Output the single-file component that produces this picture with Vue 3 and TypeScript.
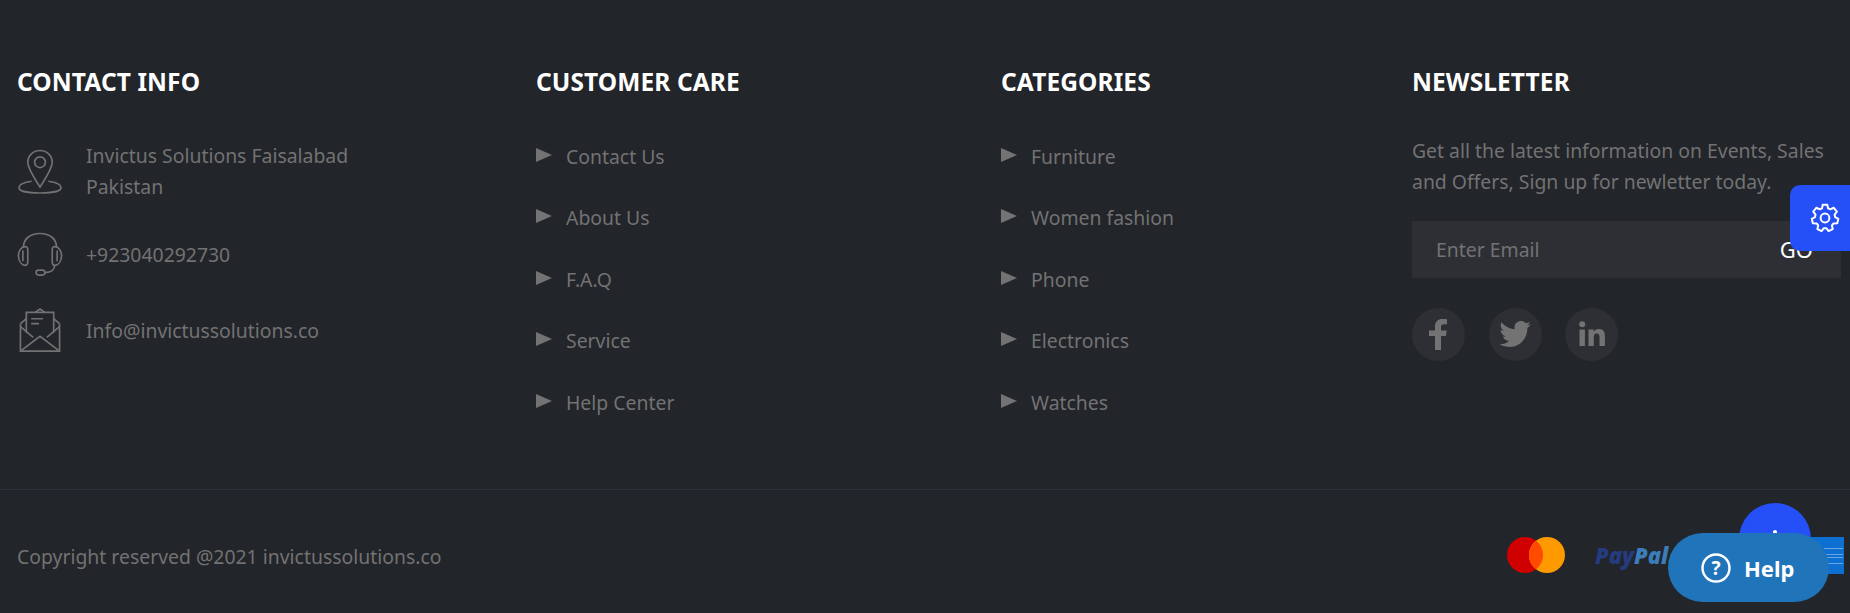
<script setup lang="ts">
const care: string[] = ['Contact Us', 'About Us', 'F.A.Q', 'Service', 'Help Center']
const categories: string[] = ['Furniture', 'Women fashion', 'Phone', 'Electronics', 'Watches']
</script>

<template>
  <footer class="footer">
    <div class="columns">
      <section>
        <h4>CONTACT INFO</h4>
        <div class="contact first">
          <svg class="ci" viewBox="0 0 46 46" fill="none" stroke="#727272" stroke-width="1.700">
            <path d="M23 1.500c-7 0-12.500 5.500-12.500 12 0 6.500 6 15 12.500 25.500 6.500-10.500 12.500-19 12.500-25.500 0-6.500-5.500-12-12.500-12z" />
            <circle cx="23" cy="13.500" r="5.500" />
            <path d="M14.500 33C6.500 34 1.500 36.500 1.500 39.500 1.500 43 11 45 23 45s21.500-2 21.500-5.500c0-3-5-5.500-13-6.500" />
          </svg>
          <p>Invictus Solutions Faisalabad<br />Pakistan</p>
        </div>
        <div class="contact second">
          <svg class="ci" viewBox="0 0 46 46" fill="none" stroke="#727272" stroke-width="1.700">
            <path d="M6 16C6 7 13 1.500 23 1.500S40 7 40 16" />
            <path d="M7 15C3.500 16 1 20 1 24.500S3.500 33 7 34c2 .3 3.500-.7 3.500-3V18c0-2.300-1.500-3.300-3.500-3z" />
            <path d="M39 15c3.500 1 6 5 6 9.500S42.500 33 39 34c-2 .3-3.500-.7-3.500-3V18c0-2.300 1.500-3.300 3.500-3z" />
            <path d="M5.500 19v11M40.500 19v11" />
            <path d="M38 34c0 4-3 7.500-10 7.500" />
            <rect x="19" y="39" width="9" height="5" rx="2.500" />
          </svg>
          <p>+923040292730</p>
        </div>
        <div class="contact third">
          <svg class="ci" viewBox="0 0 46 46" fill="none" stroke="#727272" stroke-width="1.700">
            <path d="M3 16v28h40V16" />
            <path d="M3 16l6-5M43 16l-6-5M3 44l20-15 20 15" />
            <path d="M3 19l13 11M43 19L30 30" />
            <path d="M9 25V4.500h28V25" />
            <path d="M18 4.500L23 1l5 3.500M14 11h12M14 16h8" />
          </svg>
          <p>Info@invictussolutions.co</p>
        </div>
      </section>

      <section>
        <h4>CUSTOMER CARE</h4>
        <ul>
          <li v-for="item in care" :key="item"><i class="arrow"></i><span>{{ item }}</span></li>
        </ul>
      </section>

      <section>
        <h4>CATEGORIES</h4>
        <ul>
          <li v-for="item in categories" :key="item"><i class="arrow"></i><span>{{ item }}</span></li>
        </ul>
      </section>

      <section class="news">
        <h4>NEWSLETTER</h4>
        <p class="blurb">Get all the latest information on Events, Sales and Offers, Sign up for newletter today.</p>
        <div class="subscribe">
          <span class="placeholder">Enter Email</span>
          <span class="go">GO</span>
        </div>
        <div class="social">
          <span class="round">
            <svg width="20" height="31" viewBox="0 0 20 31" fill="#737373"><path d="M6 31V17H0v-5.500h6V7.500C6 2.500 9 0 13.500 0c2 0 3.800.2 4.500.3v5h-3c-2.300 0-3 1.100-3 2.800v3.400h5.700l-.8 5.500H12v14z" /></svg>
          </span>
          <span class="round">
            <svg width="32" height="26" viewBox="0 0 24 20" fill="#737373"><path d="M24 2.400c-.9.400-1.800.7-2.800.8 1-.6 1.800-1.600 2.200-2.700-1 .6-2 1-3.100 1.200A4.900 4.900 0 0 0 11.900 6.200C7.800 6 4.200 4 1.700.9A4.900 4.900 0 0 0 3.200 7.500c-.8 0-1.600-.2-2.200-.6v.1c0 2.400 1.700 4.400 3.900 4.800-.7.200-1.500.2-2.200.1.600 2 2.400 3.400 4.600 3.400A9.900 9.900 0 0 1 0 17.800 14 14 0 0 0 7.500 20c9.100 0 14-7.500 14-14v-.6c1-.7 1.800-1.600 2.500-3z" /></svg>
          </span>
          <span class="round">
            <svg width="26" height="26" viewBox="0 0 26 26" fill="#737373"><circle cx="3.200" cy="3.200" r="3" /><rect x=".5" y="8.500" width="5.400" height="16.500" /><path d="M9.500 8.500h5.200v2.300c.8-1.400 2.600-2.700 5.200-2.700 5 0 6 3.300 6 7.600V25h-5.400v-8.300c0-2-.1-4.300-2.700-4.300s-3 2-3 4.200V25H9.500z" /></svg>
          </span>
        </div>
      </section>
    </div>

    <div class="bottom">
      <p class="copy">Copyright reserved @2021 invictussolutions.co</p>
      <div class="pay">
        <svg class="mc" width="58" height="36" viewBox="0 0 58 36">
          <circle cx="18" cy="18" r="18" fill="#d00000" />
          <circle cx="40" cy="18" r="18" fill="#ff9900" />
          <path d="M29 3.700a18 18 0 0 1 0 28.600 18 18 0 0 1 0-28.600z" fill="#ff4b00" />
        </svg>
        <span class="paypal"><b>Pay</b><b class="pal">Pal</b></span>
        <span class="amex">
          <i></i><i></i>
        </span>
      </div>
    </div>

    <button class="gear" type="button" aria-label="Settings">
      <svg width="32" height="32" viewBox="0 0 24 24" fill="none" stroke="#fff" stroke-width="1.500" stroke-linejoin="round">
        <path d="M10.300 2.600h3.400l.6 2.700 1.700.8 2.500-1.200 2.400 2.900-1.700 2.200.4 1.900 2.400 1.300-.8 3.400-2.800.1-1.200 1.500.6 2.700-3.100 1.500-1.700-2.200h-1.900l-1.700 2.200-3.100-1.500.6-2.700-1.200-1.500-2.800-.1-.8-3.400 2.400-1.300.4-1.900-1.700-2.200 2.400-2.900 2.500 1.200 1.700-.8z" transform="translate(0 -.6)" />
        <circle cx="12" cy="12" r="3.300" />
      </svg>
    </button>
    <div class="top-btn"><i></i></div>
    <button class="help" type="button">
      <svg width="30" height="30" viewBox="0 0 30 30" fill="none" stroke="#fff" stroke-width="2.400"><circle cx="15" cy="15" r="13.500" /></svg>
      <span class="qmark">?</span>
      <span>Help</span>
    </button>
  </footer>
</template>

<style>
html, body { margin: 0; background: #22252a; overflow: hidden; }
</style>

<style scoped>
.footer {
  position: relative;
  width: 1850px;
  height: 613px;
  overflow: hidden;
  background: #22252a;
  color: #727272;
  font-family: "Noto Sans", "Open Sans", sans-serif;
  font-size: 19.400px;
  line-height: 31px;
}
.columns {
  display: grid;
  grid-template-columns: 519px 465px 411px 428px;
  padding: 63px 0 0 17px;
  box-sizing: border-box;
  border-bottom: 1px solid #2d3036;
  height: 490px;
}
h4 {
  margin: 0;
  color: #fff;
  font-size: 24.500px;
  font-weight: 700;
  line-height: 37px;
  letter-spacing: 0.1px;
}
p { margin: 0; }
.contact {
  display: flex;
  align-items: center;
  gap: 23px;
}
.ci { width: 46px; height: 45px; flex: none; }
.first { margin-top: 40px; }
.second { margin-top: 30px; }
.third { margin-top: 31px; }
ul { list-style: none; margin: 40.500px 0 0; padding: 0; }
li {
  display: flex;
  align-items: center;
  height: 31px;
  margin-bottom: 30.500px;
}
.arrow {
  width: 0;
  height: 0;
  border-left: 16px solid #737373;
  border-top: 7.500px solid transparent;
  border-bottom: 7.500px solid transparent;
  margin: -3px 14px 0 0;
}
.blurb { margin-top: 34.500px; width: 428px; }
.subscribe {
  display: flex;
  justify-content: space-between;
  align-items: center;
  box-sizing: border-box;
  width: 429px;
  height: 57px;
  margin-top: 24px;
  padding: 0 28px 0 24px;
  background: #2d2f35;
}
.go { color: #fff; font-size: 22px; }
.social { display: flex; gap: 23.500px; margin-top: 30px; }
.round {
  display: flex;
  align-items: center;
  justify-content: center;
  width: 53px;
  height: 53px;
  border-radius: 50%;
  background: #2d2f35;
}
.bottom {
  display: flex;
  justify-content: space-between;
  align-items: center;
  padding: 0 0 0 17px;
  height: 132px;
}
.pay { display: flex; align-items: center; width: 343px; height: 37px; position: relative; top: -1px; }
.mc { position: absolute; left: 0; top: 0; }
.paypal {
  position: absolute;
  left: 88px;
  top: 3px;
  font-style: italic;
  font-size: 22px;
  font-family: "Open Sans", sans-serif;
}
.paypal b { color: #253b80; font-weight: 800; }
.paypal .pal { color: #3b7dbb; }
.amex {
  position: absolute;
  right: 6px;
  top: 0;
  width: 60px;
  height: 37px;
  background: #0d6fd0;
}
.amex i {
  position: absolute;
  right: 1px;
  width: 19px;
  height: 5px;
  border-top: 1px solid #6ba6e4;
  border-bottom: 1px solid #6ba6e4;
}
.amex i:first-child { top: 11px; }
.amex i:last-child { top: 20px; }
.gear {
  position: absolute;
  right: 0;
  top: 185px;
  width: 60px;
  height: 66px;
  border: 0;
  border-radius: 10px 0 0 10px;
  background: #2550f7;
  display: flex;
  align-items: center;
  justify-content: center;
  padding: 0 0 0 10px;
}
.top-btn {
  position: absolute;
  left: 1739px;
  top: 503px;
  width: 72px;
  height: 72px;
  border-radius: 50%;
  background: #2550f7;
}
.top-btn i {
  position: absolute;
  left: 34px;
  top: 27px;
  width: 4px;
  height: 4px;
  background: #fff;
  border-radius: 2px 2px 0 0;
}
.help {
  position: absolute;
  left: 1668px;
  top: 533px;
  width: 161px;
  height: 69px;
  border: 0;
  border-radius: 35px;
  background: #2074b9;
  color: #fff;
  display: flex;
  align-items: center;
  gap: 13px;
  padding: 0 0 0 33px;
  font-family: "Noto Sans", sans-serif;
  font-size: 22px;
  font-weight: 700;
}
.qmark {
  position: absolute;
  left: 33px;
  width: 30px;
  text-align: center;
  font-size: 19px;
}
</style>
